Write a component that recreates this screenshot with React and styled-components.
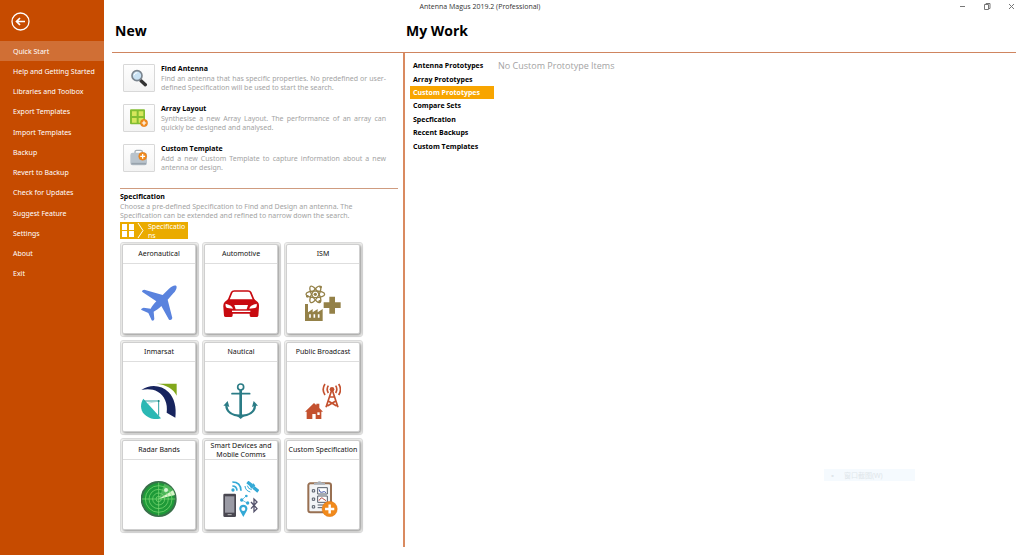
import React from 'react';
import styled, { createGlobalStyle } from 'styled-components';

const headingFont = '"Open Sans", sans-serif';

const GlobalStyle = createGlobalStyle`
  *, *::before, *::after { box-sizing: border-box; }
  body {
    margin: 0;
    background: #fff;
    color: #111;
    font-family: "Noto Sans", "Noto Sans CJK SC", sans-serif;
    font-size: 7px;
    line-height: 9px;
  }
  button { font: inherit; color: inherit; padding: 0; border: 0; background: none; cursor: pointer; }
  h1, h2, h3, p, ul { margin: 0; padding: 0; font-size: inherit; }
  ul { list-style: none; }
  svg { display: block; }
`;

const Window = styled.div`
  display: grid;
  grid-template-columns: 104px minmax(0, 1fr);
  grid-template-rows: 13px 1fr;
  min-height: 100vh;
`;

const TitleBar = styled.header`
  grid-column: 1 / -1;
  grid-row: 1;
  z-index: 1;
  display: flex;
  align-items: center;
  padding-left: 10px;
`;

const WindowTitle = styled.span`
  flex: 1;
  text-align: center;
  font-family: ${headingFont};
  color: #333;
`;

const WindowControls = styled.div`
  display: flex;
  width: 74px;
`;

const WindowButton = styled.button`
  flex: 1;
  display: grid;
  place-items: center;
  height: 13px;
`;

const Sidebar = styled.aside`
  grid-column: 1;
  grid-row: 1 / -1;
  background: #c64b00;
  color: #fff;
`;

const BackButton = styled.button`
  display: block;
  margin: 12px 0 10px 11px;
`;

const Menu = styled.ul`
  display: grid;
  grid-auto-rows: 1fr;
  height: 243px;
`;

const MenuButton = styled.button`
  width: 100%;
  height: 100%;
  padding-left: 13px;
  text-align: left;
  white-space: nowrap;
  color: #fff;
  background: ${(p) => (p.$active ? '#d06f35' : 'transparent')};
`;

const Main = styled.main`
  grid-column: 2;
  grid-row: 2;
  display: grid;
  grid-template-columns: 291px minmax(0, 1fr);
  grid-template-rows: 40px 1fr;
  padding: 0 8px;
`;

const Heading = styled.h1`
  padding: 7px 3px 0;
  border-bottom: 1px solid #cf8560;
  font-family: ${headingFont};
  font-size: 14px;
  line-height: 22px;
  font-weight: 700;
  color: #000;
`;

const NewPanel = styled.section`
  padding: 11px 5px 20px 8px;
`;

const WorkPanel = styled.section`
  display: flex;
  align-items: flex-start;
  gap: 4px;
  margin-bottom: 8px;
  padding: 6px 0 0 5px;
  border-left: 2px solid #d98a60;
`;

const ActionRow = styled.div`
  display: grid;
  grid-template-columns: 32px 225px;
  column-gap: 6px;
  height: 40px;
  padding-left: 3px;
`;

const ActionButton = styled.button`
  display: grid;
  place-items: center;
  height: 28px;
  border: 1px solid #d8d8d8;
  border-radius: 1px;
  background: linear-gradient(#fefefe, #f3f3f3);
`;

const SmallTitle = styled.h2`
  font-family: ${headingFont};
  font-size: 7px;
  line-height: 10px;
  font-weight: 700;
  color: #000;
`;

const Description = styled.p`
  color: #a3a3a3;
  text-align: ${(p) => (p.$justify ? 'justify' : 'left')};
  max-width: 242px;
`;

const Specification = styled.section`
  margin-top: 4px;
  padding-top: 3px;
  border-top: 1px solid #cf9c80;
`;

const Crumb = styled.button`
  display: flex;
  align-items: flex-start;
  gap: 3px;
  width: 68px;
  height: 17px;
  margin: 2px 0 3px;
  background: #eaab00;
  color: #fff;
  text-align: left;
  line-height: 9px;
  overflow: hidden;

  span { width: 40px; word-break: break-all; }
`;

const TileGrid = styled.div`
  display: grid;
  grid-template-columns: repeat(3, 79px);
  grid-auto-rows: 95px;
  gap: 3px;
`;

const Tile = styled.button`
  padding: 1px 2px 2px 1px;
  border: 1px solid #dedede;
  border-radius: 3px;
  background: #f6f6f4;
`;

const Card = styled.span`
  display: grid;
  grid-template-rows: 19px 1fr;
  height: 100%;
  border: 1px solid #cfcfcf;
  border-radius: 2px;
  background: #fff;
  box-shadow: 1px 1px 3px #8c8c8c;
`;

const CardTitle = styled.span`
  display: grid;
  place-items: center;
  padding-bottom: 2px;
  border-bottom: 1px solid #dedede;
  white-space: pre;
`;

const CardArt = styled.span`
  display: grid;
  justify-content: center;
  padding-top: 21px;
`;

const WorkList = styled.ul`
  display: grid;
  grid-auto-rows: 1fr;
  width: 84px;
  height: 94px;
`;

const WorkButton = styled.button`
  width: 100%;
  height: 100%;
  padding-left: 3px;
  text-align: left;
  font-family: ${headingFont};
  font-weight: 700;
  color: ${(p) => (p.$active ? '#fff' : '#000')};
  background: ${(p) => (p.$active ? '#f8a500' : 'transparent')};
`;

const Empty = styled.p`
  padding-top: 1px;
  font-family: ${headingFont};
  font-size: 9px;
  line-height: 12px;
  color: #a3a3a3;
`;

const FadingHint = styled.div`
  position: absolute;
  right: 109px;
  bottom: 74px;
  display: flex;
  align-items: center;
  gap: 8px;
  width: 91px;
  height: 12px;
  padding-left: 5px;
  background: #f5fafe;
  color: #dfe6ea;
`;

const Art = ({ children, size = 36, box = 108 }) => (
  <svg width={size} height={size} viewBox={`0 0 ${box} ${box}`} fill="none" aria-hidden="true">
    {children}
  </svg>
);

const PlusBadge = ({ x, y, r }) => (
  <g>
    <circle cx={x} cy={y} r={r} fill="#f18a1c" stroke="#d96d10" strokeWidth="1" />
    <path d={`M${x - r * 0.6} ${y}h${r * 1.2}M${x} ${y - r * 0.6}v${r * 1.2}`} stroke="#fff" strokeWidth={r * 0.32} />
  </g>
);

const Plane = () => (
  <Art>
    <path fill="#5a83de" d="M106 3C102-1 91 4 84 11L65 30 10 14Q3 14 3 20L46 49C38 57 32 65 29 71L8 68Q1 69 0 74L22 84 32 106Q38 109 40 102L38 80C46 76 54 70 61 63L84 104Q92 107 94 99L80 44 97 25C104 18 109 8 106 3Z" />
  </Art>
);

const Car = () => (
  <Art>
    <path d="M15 49L26 22Q28 18 34 18H75Q81 18 83 22L94 49" stroke="#c80a10" strokeWidth="5" />
    <path fill="#c80a10" d="M15 43H94L104 51Q109 56 108 66L106 92Q105 96 101 96H84Q80 96 80 91V86H29V91Q29 96 25 96H8Q4 96 3 92L1 66Q0 56 5 51ZM8 56Q6 68 13 69L30 71Q28 61 8 56ZM101 56Q103 68 96 69L79 71Q81 61 101 56ZM34 60L38 73H71L75 60Z" fillRule="evenodd" />
    <path d="M27 79H82" stroke="#fff" strokeWidth="4" />
  </Art>
);

const Ism = () => (
  <Art>
    <g stroke="#948148" strokeWidth="4">
      <ellipse cx="31" cy="28" rx="28" ry="10" />
      <ellipse cx="31" cy="28" rx="28" ry="10" transform="rotate(60 31 28)" />
      <ellipse cx="31" cy="28" rx="28" ry="10" transform="rotate(120 31 28)" />
    </g>
    <circle cx="31" cy="28" r="5" fill="#948148" />
    <g fill="#948148">
      <circle cx="47" cy="6" r="4" /><circle cx="7" cy="34" r="4" /><circle cx="44" cy="49" r="4" />
      <path d="M0 57H9V82L23 72V82L38 72V82L53 72V108H0Z" />
      <path d="M73 35H90V52H107V69H90V86H73V69H56V52H73Z" />
    </g>
    <path d="M15 88V98M28 88V98M41 88V98" stroke="#fff" strokeWidth="5" />
  </Art>
);

const Inmarsat = () => (
  <Art>
    <path fill="#82a81c" d="M46 2H107V38C97 17 76 5 46 2Z" />
    <path fill="#17245e" d="M1 21C28 3 61 6 83 28C100 46 107 72 103 104L77 89C81 61 70 37 50 26C36 18 18 17 1 21Z" />
    <path fill="#2bb8b4" d="M7 47L60 106C41 112 21 106 9 93C-3 79-2 61 7 47Z" />
    <path d="M9 54H53V98" stroke="#2c9fa0" strokeWidth="3" />
    <path d="M20 61L53 54" stroke="#9ed8d6" strokeWidth="2" />
    <circle cx="53" cy="54" r="3" fill="#17857f" />
  </Art>
);

const Anchor = () => (
  <Art>
    <g stroke="#2b7c86">
      <circle cx="53" cy="12" r="9" strokeWidth="5" />
      <path d="M27 32H80" strokeWidth="5" strokeLinecap="round" />
      <path d="M53 21V100" strokeWidth="8" />
      <path d="M10 66C10 88 30 98 53 99C76 98 96 88 96 66" strokeWidth="7" />
    </g>
    <path fill="#2b7c86" d="M1 68L14 54 19 72 10 68ZM105 68L92 54 87 72 96 68ZM32 95Q44 97 53 108Q62 97 74 95Z" />
  </Art>
);

const Broadcast = () => (
  <Art>
    <g fill="#c4512f">
      <path d="M27 60L34 67V62H43V75L54 86H49V108H32V93H22V108H5V86H0Z" />
      <circle cx="81" cy="19" r="7" />
    </g>
    <path d="M37 88H44V96H37Z" fill="#fff" />
    <g stroke="#c4512f" strokeWidth="5">
      <path d="M80 22L63 73M82 22L99 73M75 42H87M71 55L95 69M91 55L67 69" />
      <path d="M70 8Q63 19 70 30M60 3Q49 19 60 36M92 8Q99 19 92 30M101 3Q112 19 101 36" />
    </g>
  </Art>
);

const Radar = () => (
  <Art>
    <circle cx="53" cy="54" r="51" fill="#1e9a38" stroke="#39704a" strokeWidth="6" />
    <path d="M53 54L70 8Q96 17 102 39Z" fill="#4db55a" />
    <path d="M53 54L96 28L102 42Z" fill="#d9f5cb" />
    <g stroke="#83df78" strokeWidth="2">
      <circle cx="53" cy="54" r="40" /><circle cx="53" cy="54" r="29" />
      <circle cx="53" cy="54" r="18" /><circle cx="53" cy="54" r="8" />
      <path d="M3 54H103M53 4V104" />
    </g>
    <circle cx="75" cy="27" r="6" fill="#d5f4d2" />
  </Art>
);

const SmartDevices = () => (
  <Art>
    <rect x="1" y="38" width="38" height="70" rx="4" fill="#494750" />
    <rect x="6" y="46" width="28" height="49" fill="#9a9aa4" />
    <path d="M14 101H26" stroke="#bbb" strokeWidth="3" />
    <g stroke="#33a9d6" strokeWidth="5">
      <path d="M28 15Q41 15 42 29M28 3Q53 3 54 29" />
      <path d="M57 57L68 46M57 57L72 66" strokeWidth="2" />
      <path d="M66 15Q67 29 82 33M73 14Q75 24 86 26" strokeWidth="3" />
      <path d="M73 3L86 13M91 19L106 31" strokeWidth="10" />
      <path d="M83 20L94 10" strokeWidth="9" />
    </g>
    <g fill="#33a9d6">
      <circle cx="30" cy="27" r="5" /><circle cx="56" cy="57" r="5" />
      <circle cx="70" cy="45" r="4" /><circle cx="74" cy="66" r="5" />
      <path fillRule="evenodd" d="M61 108L51 90C45 79 52 71 61 71S77 79 71 90ZM61 78A6 6 0 1 0 61 90A6 6 0 1 0 61 78Z" />
    </g>
    <path d="M84 63L102 83L93 92V54L102 63L84 83" stroke="#55536c" strokeWidth="4" />
  </Art>
);

const CustomSpec = () => (
  <Art>
    <rect x="10" y="7" width="68" height="87" rx="6" fill="#f2f4f6" stroke="#987052" strokeWidth="6" />
    <path d="M27 11V5H36Q43-3 51 5H60V11Z" fill="#aab1b9" />
    <g stroke="#555d69" strokeWidth="3">
      <path d="M22 26H29V33H22ZM22 51H29V58H22ZM22 74H29V81H22Z" />
      <path d="M38 20H67V39H38ZM38 45H67V64H38Z" fill="#fff" />
      <path d="M38 72H58M38 80H53" />
    </g>
    <path d="M42 25Q44 36 50 34Q59 29 63 35" stroke="#4659aa" strokeWidth="3" />
    <path d="M42 59Q49 46 54 53L63 59" stroke="#b34b43" strokeWidth="3" />
    <PlusBadge x={74} y={84} r={23} />
  </Art>
);

const Magnifier = () => (
  <Art size={18} box={54}>
    <path d="M33 35L46 47" stroke="#333" strokeWidth="10" strokeLinecap="round" />
    <circle cx="21" cy="20" r="15" fill="#c9e2f4" stroke="#7b858f" strokeWidth="5" />
    <path d="M12 19Q14 11 22 11" stroke="#fff" strokeWidth="3" />
  </Art>
);

const ArrayGrid = () => (
  <Art size={18} box={54}>
    <rect x="0" y="1" width="45" height="45" rx="3" fill="#83bd32" />
    <path d="M6 7H20V21H6ZM26 7H40V21H26ZM6 27H20V41H6ZM26 27H40V41H26Z" fill="#d7e65c" />
    <PlusBadge x={42} y={42} r={11} />
  </Art>
);

const Toolcase = () => (
  <Art size={18} box={54}>
    <path d="M15 13V8Q15 4 20 4H32Q37 4 37 8V13" stroke="#a5aeb6" strokeWidth="4" />
    <rect x="1" y="11" width="50" height="38" rx="7" fill="#b9c3cc" />
    <path d="M4 44H48" stroke="#98a3ad" strokeWidth="5" />
    <PlusBadge x={38} y={22} r={12} />
  </Art>
);

const menuItems = [
  'Quick Start', 'Help and Getting Started', 'Libraries and Toolbox', 'Export Templates',
  'Import Templates', 'Backup', 'Revert to Backup', 'Check for Updates',
  'Suggest Feature', 'Settings', 'About', 'Exit',
];

const actions = [
  { title: 'Find Antenna', Icon: Magnifier, text: 'Find an antenna that has specific properties. No predefined or user-defined Specification will be used to start the search.' },
  { title: 'Array Layout', Icon: ArrayGrid, text: 'Synthesise a new Array Layout. The performance of an array can quickly be designed and analysed.' },
  { title: 'Custom Template', Icon: Toolcase, text: 'Add a new Custom Template to capture information about a new antenna or design.' },
];

const tiles = [
  ['Aeronautical', Plane], ['Automotive', Car], ['ISM', Ism],
  ['Inmarsat', Inmarsat], ['Nautical', Anchor], ['Public Broadcast', Broadcast],
  ['Radar Bands', Radar], ['Smart Devices and\nMobile Comms', SmartDevices], ['Custom Specification', CustomSpec],
];

const workItems = [
  'Antenna Prototypes', 'Array Prototypes', 'Custom Prototypes', 'Compare Sets',
  'Specfication', 'Recent Backups', 'Custom Templates',
];

export default function App() {
  return (
    <>
      <GlobalStyle />
      <Window>
        <TitleBar>
          <WindowTitle>Antenna Magus 2019.2 (Professional)</WindowTitle>
          <WindowControls>
            <WindowButton aria-label="Minimize">
              <svg width="7" height="7" viewBox="0 0 7 7"><path d="M1 3.5H6" stroke="#777" /></svg>
            </WindowButton>
            <WindowButton aria-label="Restore">
              <svg width="7" height="7" viewBox="0 0 7 7" fill="none" stroke="#777"><path d="M.5 1.5H4.500V6.500H.5ZM2 1.500V.5H6V5.500H4.500" /></svg>
            </WindowButton>
            <WindowButton aria-label="Close">
              <svg width="7" height="7" viewBox="0 0 7 7"><path d="M1 1L6 6M6 1L1 6" stroke="#777" /></svg>
            </WindowButton>
          </WindowControls>
        </TitleBar>
        <Sidebar>
          <BackButton aria-label="Back">
            <svg width="19" height="19" viewBox="0 0 19 19" fill="none" stroke="#fff">
              <circle cx="9.500" cy="9.500" r="8.500" strokeWidth="1.300" />
              <path d="M14 9.500H6M9 6L5.500 9.500L9 13" strokeWidth="1.700" />
            </svg>
          </BackButton>
          <nav>
            <Menu>
              {menuItems.map((label, i) => (
                <li key={label}><MenuButton $active={i === 0}>{label}</MenuButton></li>
              ))}
            </Menu>
          </nav>
        </Sidebar>
        <Main>
          <Heading>New</Heading>
          <Heading>My Work</Heading>
          <NewPanel>
            {actions.map(({ title, text, Icon }) => (
              <ActionRow key={title}>
                <ActionButton aria-label={title}><Icon /></ActionButton>
                <div>
                  <SmallTitle>{title}</SmallTitle>
                  <Description $justify>{text}</Description>
                </div>
              </ActionRow>
            ))}
            <Specification>
              <SmallTitle>Specification</SmallTitle>
              <Description>
                Choose a pre-defined Specification to Find and Design an antenna. The Specification can be extended and refined to narrow down the search.
              </Description>
              <Crumb>
                <svg width="25" height="17" viewBox="0 0 25 17">
                  <path d="M2 2H7V8H2ZM9 2H14V8H9ZM2 9H7V15H2ZM9 9H14V15H9Z" fill="#fff" />
                  <path d="M18 1L23 8.500L18 16" stroke="#fff" fill="none" />
                </svg>
                <span>Specifications</span>
              </Crumb>
              <TileGrid>
                {tiles.map(([title, Icon]) => (
                  <Tile key={title}>
                    <Card>
                      <CardTitle>{title}</CardTitle>
                      <CardArt><Icon /></CardArt>
                    </Card>
                  </Tile>
                ))}
              </TileGrid>
            </Specification>
          </NewPanel>
          <WorkPanel>
            <WorkList>
              {workItems.map((label) => (
                <li key={label}><WorkButton $active={label === 'Custom Prototypes'}>{label}</WorkButton></li>
              ))}
            </WorkList>
            <Empty>No Custom Prototype Items</Empty>
          </WorkPanel>
        </Main>
      </Window>
      <FadingHint><span>▪</span><span>窗口截图(W)</span></FadingHint>
    </>
  );
}
